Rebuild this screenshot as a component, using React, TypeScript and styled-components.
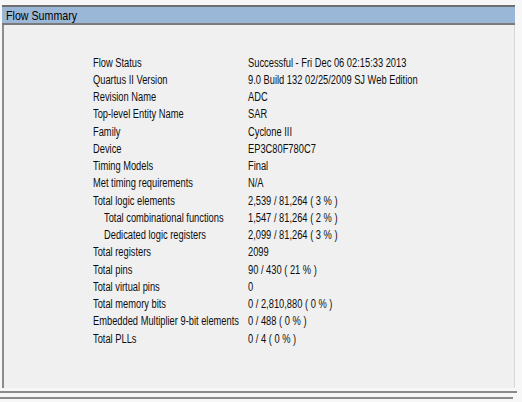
import React from "react";
import styled, { createGlobalStyle } from "styled-components";

const Global = createGlobalStyle`
  html, body {
    margin: 0;
    padding: 0;
    background: #f7f7f7;
  }
  body {
    width: 522px;
    height: 402px;
    overflow: hidden;
    font-family: "Liberation Sans", Arial, sans-serif;
  }
`;

/* Tahoma-like narrow rendering of the report's UI font */
const NARROW = 0.745;

const Frame = styled.div`
  padding-top: 5px;
  padding-left: 2px;
  width: 520px;
`;

const Panel = styled.section`
  width: 513px;
  display: flex;
  flex-direction: column;
`;

const Header = styled.div`
  height: 16px;
  background: #9bb7d7;
  border-top: 2px solid #6f6f6f;
  border-bottom: 2px solid #7a7a7a;
  display: flex;
  align-items: center;
  padding-left: 4px;
  color: #000;
`;

const Title = styled.span`
  display: inline-block;
  font-size: 13px;
  transform: scaleX(0.82);
  transform-origin: left center;
  white-space: nowrap;
`;

const Body = styled.div`
  height: 363px;
  background: #f0f0f0;
  border-left: 2px solid #8c8c8c;
  border-right: 1px solid #d8d8d8;
  padding: 29px 0 0 89px;
  box-sizing: border-box;
`;

const Table = styled.div`
  display: grid;
  grid-template-columns: ${155 / NARROW}px auto;
  grid-auto-rows: 17.25px;
  align-items: center;
  font-size: 12.5px;
  color: #0d0d0d;
  transform: scaleX(${NARROW});
  transform-origin: left top;
`;

const Label = styled.div<{ $indent?: boolean }>`
  padding-left: ${(p) => (p.$indent ? `${11 / NARROW}px` : "0")};
  white-space: nowrap;
`;

const Value = styled.div`
  white-space: nowrap;
`;

const Rule = styled.div<{ $w: number; $gap: number }>`
  height: 2px;
  width: ${(p) => p.$w}px;
  margin-top: ${(p) => p.$gap}px;
  background: #8a8a8a;
`;

const rows: [string, string, boolean?][] = [
  ["Flow Status", "Successful - Fri Dec 06 02:15:33 2013"],
  ["Quartus II Version", "9.0 Build 132 02/25/2009 SJ Web Edition"],
  ["Revision Name", "ADC"],
  ["Top-level Entity Name", "SAR"],
  ["Family", "Cyclone III"],
  ["Device", "EP3C80F780C7"],
  ["Timing Models", "Final"],
  ["Met timing requirements", "N/A"],
  ["Total logic elements", "2,539 / 81,264 ( 3 % )"],
  ["Total combinational functions", "1,547 / 81,264 ( 2 % )", true],
  ["Dedicated logic registers", "2,099 / 81,264 ( 3 % )", true],
  ["Total registers", "2099"],
  ["Total pins", "90 / 430 ( 21 % )"],
  ["Total virtual pins", "0"],
  ["Total memory bits", "0 / 2,810,880 ( 0 % )"],
  ["Embedded Multiplier 9-bit elements", "0 / 488 ( 0 % )"],
  ["Total PLLs", "0 / 4 ( 0 % )"],
];

export default function App() {
  return (
    <>
      <Global />
      <Frame>
        <Panel>
          <Header>
            <Title>Flow Summary</Title>
          </Header>
          <Body>
            <Table>
              {rows.map(([k, v, indent]) => (
                <React.Fragment key={k}>
                  <Label $indent={indent}>{k}</Label>
                  <Value>{v}</Value>
                </React.Fragment>
              ))}
            </Table>
          </Body>
        </Panel>
      </Frame>
      <Rule $w={517} $gap={3} />
      <Rule $w={513} $gap={4} />
    </>
  );
}
